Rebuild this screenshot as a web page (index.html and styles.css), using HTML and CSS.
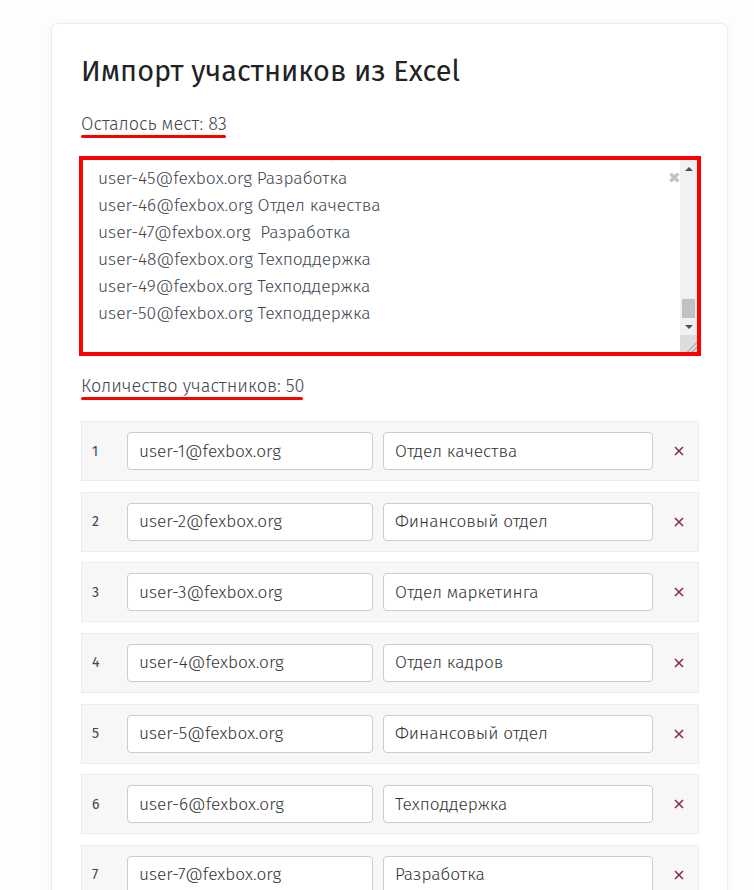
FILE: index.html
```html
<!DOCTYPE html>
<html>
<head>
<meta charset="utf-8">
<meta name="viewport" content="width=device-width, initial-scale=1">
<title>Импорт участников из Excel</title>
<link rel="stylesheet" href="styles.css">
</head>
<body>
<div class="page">
    <div class="card">
        <h1 class="title">Импорт участников из Excel</h1>

        <p class="label"><span class="marked">Осталось мест: 83</span></p>

        <div class="paste">
            <div class="paste-text">
                <div class="paste-lines">
                    <div>user-44@fexbox.org Отдел маркетинга</div>
                    <div>user-45@fexbox.org Разработка</div>
                    <div>user-46@fexbox.org Отдел качества</div>
                    <div>user-47@fexbox.org &nbsp;Разработка</div>
                    <div>user-48@fexbox.org Техподдержка</div>
                    <div>user-49@fexbox.org Техподдержка</div>
                    <div>user-50@fexbox.org Техподдержка</div>
                </div>
            </div>
            <span class="paste-clear">&#10006;</span>
            <div class="scrollbar">
                <div class="sb-arrow sb-up"></div>
                <div class="sb-track"><div class="sb-thumb"></div></div>
                <div class="sb-arrow sb-down"></div>
                <div class="sb-resize"></div>
            </div>
        </div>

        <p class="label label-count"><span class="marked">Количество участников: 50</span></p>

        <div class="rows">
            <div class="row">
                <span class="row-num">1</span>
                <input class="field field-email" value="user-1@fexbox.org">
                <input class="field field-dept" value="Отдел качества">
                <span class="row-remove"><svg width="10" height="10" viewBox="0 0 10 10"><path d="M1 1L9 9M9 1L1 9"/></svg></span>
            </div>
            <div class="row">
                <span class="row-num">2</span>
                <input class="field field-email" value="user-2@fexbox.org">
                <input class="field field-dept" value="Финансовый отдел">
                <span class="row-remove"><svg width="10" height="10" viewBox="0 0 10 10"><path d="M1 1L9 9M9 1L1 9"/></svg></span>
            </div>
            <div class="row">
                <span class="row-num">3</span>
                <input class="field field-email" value="user-3@fexbox.org">
                <input class="field field-dept" value="Отдел маркетинга">
                <span class="row-remove"><svg width="10" height="10" viewBox="0 0 10 10"><path d="M1 1L9 9M9 1L1 9"/></svg></span>
            </div>
            <div class="row">
                <span class="row-num">4</span>
                <input class="field field-email" value="user-4@fexbox.org">
                <input class="field field-dept" value="Отдел кадров">
                <span class="row-remove"><svg width="10" height="10" viewBox="0 0 10 10"><path d="M1 1L9 9M9 1L1 9"/></svg></span>
            </div>
            <div class="row">
                <span class="row-num">5</span>
                <input class="field field-email" value="user-5@fexbox.org">
                <input class="field field-dept" value="Финансовый отдел">
                <span class="row-remove"><svg width="10" height="10" viewBox="0 0 10 10"><path d="M1 1L9 9M9 1L1 9"/></svg></span>
            </div>
            <div class="row">
                <span class="row-num">6</span>
                <input class="field field-email" value="user-6@fexbox.org">
                <input class="field field-dept" value="Техподдержка">
                <span class="row-remove"><svg width="10" height="10" viewBox="0 0 10 10"><path d="M1 1L9 9M9 1L1 9"/></svg></span>
            </div>
            <div class="row">
                <span class="row-num">7</span>
                <input class="field field-email" value="user-7@fexbox.org">
                <input class="field field-dept" value="Разработка">
                <span class="row-remove"><svg width="10" height="10" viewBox="0 0 10 10"><path d="M1 1L9 9M9 1L1 9"/></svg></span>
            </div>
            <div class="row">
                <span class="row-num">8</span>
                <input class="field field-email" value="user-8@fexbox.org">
                <input class="field field-dept" value="Отдел кадров">
                <span class="row-remove"><svg width="10" height="10" viewBox="0 0 10 10"><path d="M1 1L9 9M9 1L1 9"/></svg></span>
            </div>
        </div>
    </div>
</div>
</body>
</html>
```

FILE: styles.css
```css
/* Reset */
* { margin: 0; padding: 0; box-sizing: border-box; }

body {
    background: #fdfdfd;
    font-family: "Fira Sans", "Open Sans", "Noto Sans", sans-serif;
    color: #333;
}

.page {
    padding: 23px 26px 0 51px;
}

/* Card */
.card {
    background: #fff;
    border: 1px solid #ececec;
    border-radius: 7px;
    box-shadow: 0 0 6px rgba(0, 0, 0, 0.04);
    padding: 31px 28px 40px 29px;
}

.title {
    font-size: 28.9px;
    font-weight: 400;
    line-height: 34px;
    color: #222;
}

.label {
    margin-top: 24px;
    font-size: 18px;
    line-height: 22px;
    font-weight: 300;
    color: #3f4650;
}

.marked {
    position: relative;
    display: inline-block;
}

/* red hand drawn underline */
.marked::after {
    content: "";
    position: absolute;
    left: 0;
    right: 1px;
    bottom: -3px;
    height: 3px;
    border-radius: 2px;
    background: #ff0000;
}

.label-count {
    margin-top: 21px;
}

/* Paste area */
.paste {
    position: relative;
    margin-top: 23px;
    height: 196px;
    display: flex;
    border: 1px solid #ccc;
    outline: 4px solid #ff0000;
    outline-offset: -2px;
    background: #fff;
}

.paste-text {
    flex: 1;
    overflow: hidden;
    padding-left: 16px;
    font-size: 17.4px;
    font-weight: 300;
    line-height: 27px;
    color: #3f4650;
}

.paste-lines {
    margin-top: -21px;
    white-space: nowrap;
}

.paste-clear {
    position: absolute;
    top: 12px;
    right: 17px;
    font-size: 15px;
    color: #c2c2c2;
    line-height: 14px;
}

.scrollbar {
    width: 17px;
    margin: 1px 1px 1px 0;
    display: flex;
    flex-direction: column;
    background: #f1f1f1;
}

.sb-arrow {
    height: 17px;
    display: flex;
    align-items: center;
    justify-content: center;
}

.sb-arrow::before {
    content: "";
    border-left: 4px solid transparent;
    border-right: 4px solid transparent;
}

.sb-up::before { border-bottom: 4px solid #505050; }
.sb-down::before { border-top: 4px solid #505050; }

.sb-track {
    flex: 1;
    display: flex;
    flex-direction: column;
    justify-content: flex-end;
    padding: 0 2px;
}

.sb-thumb {
    height: 19px;
    background: #c1c1c1;
}

.sb-resize {
    height: 17px;
    background: #dcdcdc linear-gradient(135deg, transparent 70%, #888 71%, transparent 75%, transparent 84%, #888 85%, transparent 89%);
}

/* Participant rows */
.rows {
    margin-top: 24px;
    display: flex;
    flex-direction: column;
    gap: 10.67px;
}

.row {
    display: flex;
    align-items: center;
    background: #f7f7f7;
    border: 1px solid #ececec;
    padding: 10px 0 10px 10px;
}

.row-num {
    width: 35px;
    font-size: 14px;
    color: #3f4650;
}

.field {
    height: 38px;
    border: 1px solid #ccc;
    border-radius: 4px;
    background: #fff;
    padding: 0 11px;
    font-family: inherit;
    font-size: 17.3px;
    font-weight: 300;
    color: #333;
}

.field-email {
    width: 245.5px;
}

.field-dept {
    width: 270px;
    margin-left: 10.5px;
}

.row-remove {
    flex: 1;
    display: flex;
    justify-content: center;
    padding-left: 7px;
}

.row-remove svg {
    stroke: #8a2d3c;
    stroke-width: 1.6;
    fill: none;
}
```
